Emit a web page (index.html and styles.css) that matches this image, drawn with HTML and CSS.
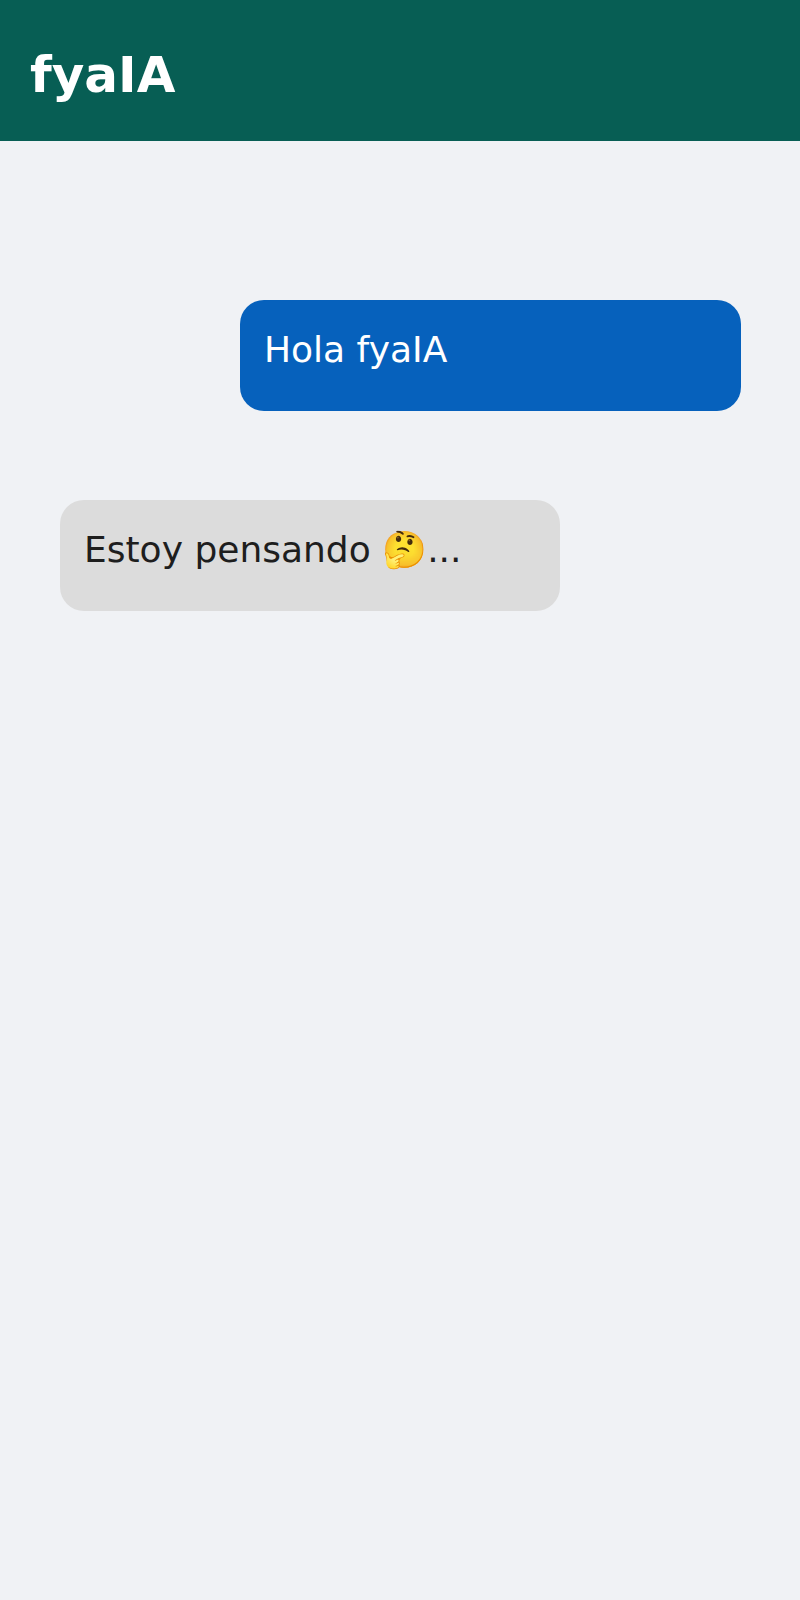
FILE: index.html
```html
<!DOCTYPE html>
<html lang="es">
<head>
<meta charset="utf-8">
<title>fyaIA</title>
<link rel="stylesheet" href="styles.css">
</head>
<body>
<header class="app-header">
  <h1 class="app-title">fyaIA</h1>
</header>
<main class="chat">
  <div class="msg msg-user">
    <div class="bubble bubble-user">Hola fyaIA</div>
  </div>
  <div class="msg msg-bot">
    <div class="bubble bubble-bot">Estoy pensando 🤔...</div>
  </div>
</main>
</body>
</html>
```

FILE: styles.css
```css
html, body {
  margin: 0;
  padding: 0;
}
body {
  background: #f0f2f5;
  font-family: "DejaVu Sans", sans-serif;
  min-height: 1600px;
}
.app-header {
  background: #075e54;
  height: 141px;
  box-sizing: border-box;
  padding: 46px 30px 0;
}
.app-title {
  margin: 0;
  color: #ffffff;
  font-size: 50px;
  font-weight: bold;
  line-height: 58px;
}
.chat {
  display: flex;
  flex-direction: column;
  gap: 89px;
  padding: 159px 59px 0 60px;
}
.msg {
  display: flex;
}
.msg-user {
  justify-content: flex-end;
}
.msg-bot {
  justify-content: flex-start;
}
.bubble {
  width: 501px;
  box-sizing: border-box;
  padding: 29px 24px 40px;
  border-radius: 24px;
  font-size: 36px;
  line-height: 42px;
}
.bubble-user {
  background: #0661bc;
  color: #ffffff;
}
.bubble-bot {
  background: #dcdcdc;
  color: #1e1e1e;
  width: 500px;
}
```
